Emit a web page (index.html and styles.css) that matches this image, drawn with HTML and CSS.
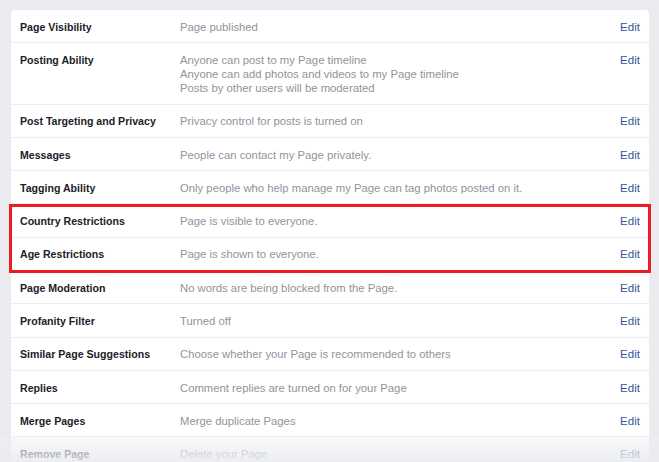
FILE: index.html
```html
<!DOCTYPE html>
<html>
<head>
<meta charset="utf-8">
<link rel="stylesheet" href="styles.css">
</head>
<body>
<div class="page">
  <div class="card">
    <div class="row"><div class="label">Page Visibility</div><div class="value">Page published</div><a class="edit">Edit</a></div>
    <div class="row"><div class="label">Posting Ability</div><div class="value">Anyone can post to my Page timeline<br>Anyone can add photos and videos to my Page timeline<br>Posts by other users will be moderated</div><a class="edit">Edit</a></div>
    <div class="row"><div class="label">Post Targeting and Privacy</div><div class="value">Privacy control for posts is turned on</div><a class="edit">Edit</a></div>
    <div class="row"><div class="label">Messages</div><div class="value">People can contact my Page privately.</div><a class="edit">Edit</a></div>
    <div class="row"><div class="label">Tagging Ability</div><div class="value">Only people who help manage my Page can tag photos posted on it.</div><a class="edit">Edit</a></div>
    <div class="highlight">
      <div class="row"><div class="label">Country Restrictions</div><div class="value">Page is visible to everyone.</div><a class="edit">Edit</a></div>
      <div class="row"><div class="label">Age Restrictions</div><div class="value">Page is shown to everyone.</div><a class="edit">Edit</a></div>
    </div>
    <div class="row"><div class="label">Page Moderation</div><div class="value">No words are being blocked from the Page.</div><a class="edit">Edit</a></div>
    <div class="row"><div class="label">Profanity Filter</div><div class="value">Turned off</div><a class="edit">Edit</a></div>
    <div class="row"><div class="label">Similar Page Suggestions</div><div class="value">Choose whether your Page is recommended to others</div><a class="edit">Edit</a></div>
    <div class="row"><div class="label">Replies</div><div class="value">Comment replies are turned on for your Page</div><a class="edit">Edit</a></div>
    <div class="row"><div class="label">Merge Pages</div><div class="value">Merge duplicate Pages</div><a class="edit">Edit</a></div>
    <div class="row"><div class="label">Remove Page</div><div class="value">Delete your Page</div><a class="edit">Edit</a></div>
  </div>
</div>
<div class="fade"></div>
</body>
</html>
```
FILE: styles.css
```css
html, body {
  margin: 0;
  padding: 0;
  height: 100%;
  overflow: hidden;
  background: #e9ebee;
  font-family: "Liberation Sans", Arial, Helvetica, sans-serif;
  font-size: 11.3px;
}
.page {
  padding: 10px 10px 0 11px;
}
.card {
  width: 638px;
  background: #fff;
  border-radius: 4px;
}
.row {
  display: flex;
  align-items: flex-start;
  padding: 9.7px 9px 8.6px 9px;
  line-height: 14px;
  border-bottom: 1px solid #eceef1;
}
.label {
  width: 160px;
  flex: none;
  font-weight: bold;
  font-size: 10.6px;
  color: #1d2129;
}
.value {
  flex: 1;
  color: #90949c;
}
.edit {
  flex: none;
  font-size: 11.6px;
  color: #365899;
  text-decoration: none;
}
.highlight {
  position: relative;
}
.highlight::after {
  content: "";
  position: absolute;
  top: 0;
  left: -2px;
  right: -2px;
  bottom: -2px;
  border: 3px solid #ec1c24;
  pointer-events: none;
}
.fade {
  position: fixed;
  left: 0;
  right: 0;
  bottom: 0;
  height: 26px;
  background: linear-gradient(to bottom, rgba(240,241,243,0.45), rgba(233,235,238,0.85));
}
```
